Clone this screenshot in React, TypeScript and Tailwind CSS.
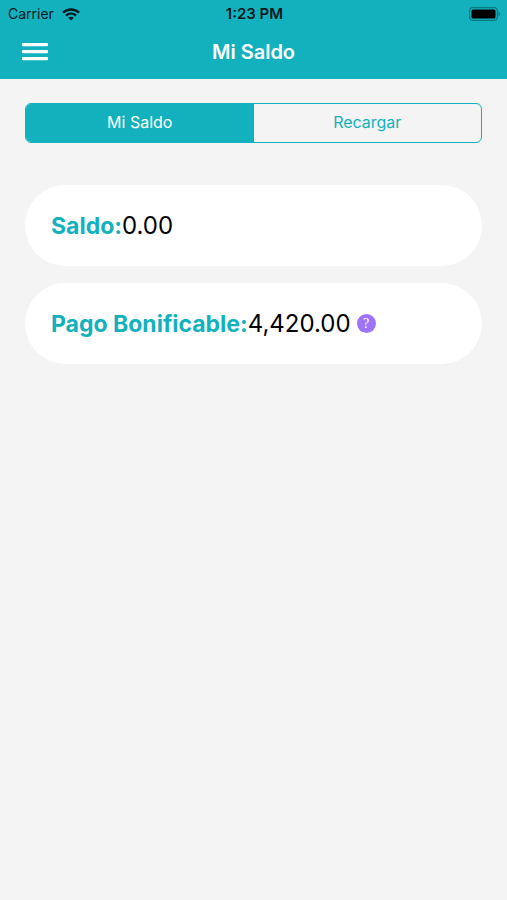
const balances = [
  { label: "Saldo:", amount: "0.00", help: false },
  { label: "Pago Bonificable:", amount: "4,420.00", help: true },
];

function WifiIcon() {
  return (
    <svg width="18" height="13" viewBox="0 0 18 13" fill="none" stroke="#04181b" strokeWidth="2.3" aria-hidden="true">
      <path d="M1 4.7C5.6 0.4 12.4 0.4 17 4.7" />
      <path d="M3.9 7.7C6.9 5 11.1 5 14.1 7.7" />
      <path d="M9 12.6L6.2 9.8C7.8 8.3 10.2 8.3 11.8 9.8Z" fill="#04181b" stroke="none" />
    </svg>
  );
}

function BatteryIcon() {
  return (
    <svg width="32" height="14" viewBox="0 0 32 14" aria-hidden="true">
      <rect x="0.7" y="0.7" width="27.6" height="12.6" rx="3.2" fill="none" stroke="#0b7983" strokeWidth="1.2" />
      <rect x="2.5" y="2.5" width="24" height="9" rx="1.5" fill="#000" />
      <path d="M29.6 4.8C31.6 5.4 31.6 8.6 29.6 9.2Z" fill="#0b7983" />
    </svg>
  );
}

export default function App() {
  return (
    <div className="min-h-screen bg-[#f4f4f4] font-['Inter',sans-serif]">
      {/* Header */}
      <header className="bg-[#13b1be]">
        <div className="grid h-7 grid-cols-3 items-center pr-1.5 pl-2 text-sm text-[#04181b]">
          <div className="flex items-center gap-2">
            <span>Carrier</span>
            <WifiIcon />
          </div>
          <span className="text-center text-[15px] font-semibold">1:23 PM</span>
          <div className="flex justify-end">
            <BatteryIcon />
          </div>
        </div>

        <div className="grid h-[51px] grid-cols-[1fr_auto_1fr] items-center px-5 pb-1">
          <button type="button" aria-label="Menú" className="w-8">
            <svg width="30" height="20" viewBox="0 0 30 20" fill="#fff" aria-hidden="true">
              <rect x="2" y="1" width="26" height="3.2" rx="1" />
              <rect x="2" y="8" width="26" height="3.2" rx="1" />
              <rect x="2" y="15" width="26" height="3.2" rx="1" />
            </svg>
          </button>
          <h1 className="text-xl font-semibold text-white">Mi Saldo</h1>
        </div>
      </header>

      <main className="px-[25px] pt-6">
        {/* Tabs */}
        <div className="grid h-10 grid-cols-2 overflow-hidden rounded-md border border-[#13b1be] text-base">
          <button type="button" className="bg-[#13b1be] pb-0.5 text-white">
            Mi Saldo
          </button>
          <button type="button" className="pb-0.5 text-[#13b1be]">
            Recargar
          </button>
        </div>

        {/* Balances */}
        <div className="mt-[42px] flex flex-col gap-[17px]">
          {balances.map((item) => (
            <section key={item.label} className="flex h-[81px] items-center rounded-full bg-white px-[26px]">
              <p className="text-2xl text-black">
                <span className="text-[23px] font-bold text-[#13b1be]">{item.label}</span>
                {item.amount}
              </p>
              {item.help && (
                <button
                  type="button"
                  aria-label="Ayuda"
                  className="ml-1.5 size-[19px] rounded-full bg-[#9d74f8] font-['Liberation_Serif',serif] text-sm leading-[19px] text-white"
                >
                  ?
                </button>
              )}
            </section>
          ))}
        </div>
      </main>
    </div>
  );
}
